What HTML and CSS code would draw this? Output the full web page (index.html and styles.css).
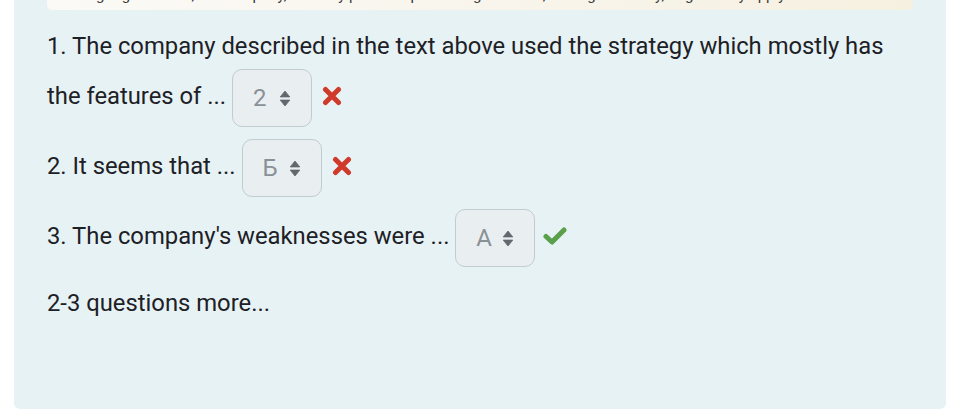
FILE: index.html
```html
<!DOCTYPE html>
<html>
<head>
<meta charset="utf-8">
<link rel="stylesheet" href="styles.css">
</head>
<body>
<div class="panel">
  <div class="note">
    <p class="note-text">learning organisation, the company, as every public or private organisation, managed its way, to gradually apply...</p>
  </div>
  <p class="q">1. The company described in the text above used the strategy which mostly has the features of ... <span class="sel"><span class="val">2</span><svg class="arr" viewBox="0 0 10 16" width="12" height="17"><path d="M5 1 L9.5 6.5 H0.5 Z M5 15 L9.5 9.5 H0.5 Z" fill="#63686e" stroke="#63686e" stroke-width="0.8" stroke-linejoin="round"/></svg></span><svg class="mark" viewBox="0 0 20 20" width="20" height="20"><path d="M3.5 3.5 L16.5 16.5 M16.5 3.5 L3.5 16.5" stroke="#d03a2a" stroke-width="5" stroke-linecap="round"/></svg></p>
  <p class="q">2. It seems that ... <span class="sel"><span class="val">Б</span><svg class="arr" viewBox="0 0 10 16" width="12" height="17"><path d="M5 1 L9.5 6.5 H0.5 Z M5 15 L9.5 9.5 H0.5 Z" fill="#63686e" stroke="#63686e" stroke-width="0.8" stroke-linejoin="round"/></svg></span><svg class="mark" viewBox="0 0 20 20" width="20" height="20"><path d="M3.5 3.5 L16.5 16.5 M16.5 3.5 L3.5 16.5" stroke="#d03a2a" stroke-width="5" stroke-linecap="round"/></svg></p>
  <p class="q">3. The company's weaknesses were ... <span class="sel"><span class="val">A</span><svg class="arr" viewBox="0 0 10 16" width="12" height="17"><path d="M5 1 L9.5 6.5 H0.5 Z M5 15 L9.5 9.5 H0.5 Z" fill="#63686e" stroke="#63686e" stroke-width="0.8" stroke-linejoin="round"/></svg></span><svg class="mark check" viewBox="0 0 24 20" width="24" height="20"><path d="M3 10.5 L9 16 L21 4" fill="none" stroke="#5a9f4a" stroke-width="5" stroke-linecap="round" stroke-linejoin="round"/></svg></p>
  <p class="q last">2-3 questions more...</p>
</div>
</body>
</html>
```
FILE: styles.css
```css
html, body {
  margin: 0;
  padding: 0;
  background: #ffffff;
}
body {
  font-family: Roboto, "Liberation Sans", sans-serif;
  color: #1d2125;
}
.panel {
  margin-left: 14px;
  width: 932px;
  height: 409px;
  box-sizing: border-box;
  padding: 0 33px;
  background: #e7f2f5;
  border-radius: 0 0 6px 6px;
  overflow: hidden;
}
.note {
  height: 10px;
  border-radius: 0 0 5px 5px;
  background: linear-gradient(90deg, #fbfaf6 0%, #f8f4ea 60%, #f6f0e0 100%);
  overflow: hidden;
  margin-bottom: 13px;
  position: relative;
}
.note-text {
  margin: 0;
  position: absolute;
  left: 4px;
  top: -14px;
  font-size: 15px;
  line-height: 18px;
  color: #3a3a3a;
  white-space: nowrap;
}
.q {
  margin: 0 0 12px;
  font-size: 23.8px;
  line-height: 46px;
}
.sel {
  display: inline-flex;
  align-items: center;
  vertical-align: middle;
  box-sizing: border-box;
  height: 58px;
  width: 80px;
  padding: 0 0 0 20px;
  background: #e9eef1;
  border: 1px solid #c3cbd1;
  border-radius: 10px;
  color: #8a9097;
  font-size: 24px;
  line-height: 1;
}
.val {
  width: 26px;
}
.arr {
  display: block;
}
.mark {
  vertical-align: middle;
  margin-left: 10px;
  position: relative;
  top: -2px;
}
.check {
  margin-left: 8px;
}
.last {
  position: relative;
  top: 1px;
}
```
